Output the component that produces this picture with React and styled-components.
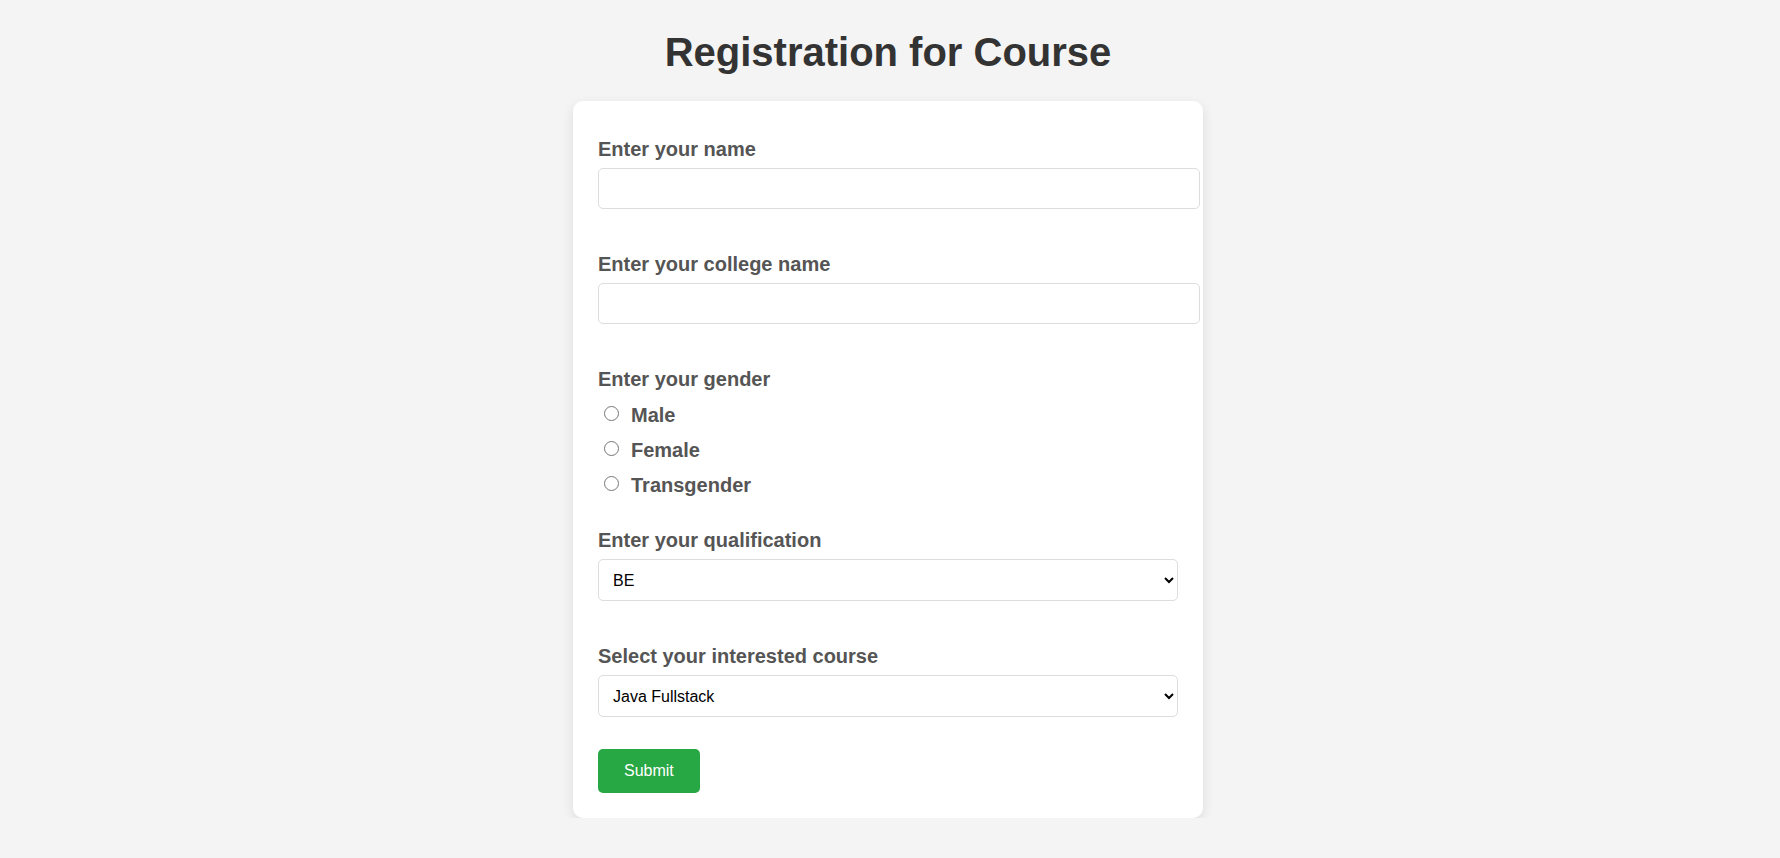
import React from "react";
import styled, { createGlobalStyle } from "styled-components";

const GlobalStyle = createGlobalStyle`
  html, body {
    margin: 0;
    padding: 0;
    background: #f4f4f4;
    font-family: "Liberation Sans", Arial, sans-serif;
  }
`;

const Page = styled.div`
  display: flex;
  flex-direction: column;
  align-items: center;
  padding: 0 4px 0 0;
`;

const Title = styled.h1`
  margin: 29px 0 26px;
  font-size: 40px;
  line-height: 46px;
  font-weight: bold;
  color: #333;
  text-align: center;
`;

const Card = styled.form`
  box-sizing: border-box;
  width: 630px;
  padding: 25px;
  background: #fff;
  border-radius: 10px;
  box-shadow: 0 4px 12px rgba(0, 0, 0, 0.1);
  display: flex;
  flex-direction: column;
  align-items: flex-start;
`;

const Label = styled.label`
  display: block;
  margin: 12px 0 7px;
  font-size: 20px;
  line-height: 23px;
  font-weight: bold;
  color: #555;
`;

const TextInput = styled.input`
  box-sizing: content-box;
  width: 100%;
  height: 19px;
  padding: 10px;
  margin: 0 0 32px;
  border: 1px solid #ddd;
  border-radius: 5px;
  font-family: "Liberation Sans", Arial, sans-serif;
  font-size: 16px;
  background: #fff;
  outline: none;
`;

const Select = styled.select`
  box-sizing: border-box;
  width: 100%;
  height: 42px;
  padding: 0 10px;
  margin: 0 0 32px;
  border: 1px solid #ddd;
  border-radius: 5px;
  font-family: "Liberation Sans", Arial, sans-serif;
  font-size: 16px;
  color: #000;
  background: #fff;
`;

const RadioGroup = styled.div`
  display: flex;
  flex-direction: column;
  gap: 12px;
  padding-top: 6px;
  margin-bottom: 20px;
`;

const RadioRow = styled.label`
  display: flex;
  align-items: center;
  font-size: 20px;
  line-height: 23px;
  font-weight: bold;
  color: #555;
`;

const Radio = styled.input`
  width: 15px;
  height: 15px;
  margin: 0 12px 4px 6px;
`;

const SubmitButton = styled.button`
  padding: 13px 26px;
  border: none;
  border-radius: 5px;
  background: #28a745;
  color: #fff;
  font-family: "Liberation Sans", Arial, sans-serif;
  font-size: 16px;
  line-height: 18px;
  cursor: pointer;
`;

export default function App() {
  return (
    <>
      <GlobalStyle />
      <Page>
        <Title>Registration for Course</Title>
        <Card onSubmit={(e) => e.preventDefault()}>
          <Label htmlFor="name">Enter your name</Label>
          <TextInput id="name" type="text" />

          <Label htmlFor="college">Enter your college name</Label>
          <TextInput id="college" type="text" />

          <Label>Enter your gender</Label>
          <RadioGroup>
            <RadioRow>
              <Radio type="radio" name="gender" value="male" />
              Male
            </RadioRow>
            <RadioRow>
              <Radio type="radio" name="gender" value="female" />
              Female
            </RadioRow>
            <RadioRow>
              <Radio type="radio" name="gender" value="transgender" />
              Transgender
            </RadioRow>
          </RadioGroup>

          <Label htmlFor="qual">Enter your qualification</Label>
          <Select id="qual" defaultValue="BE">
            <option value="BE">BE</option>
            <option value="BTech">BTech</option>
            <option value="BSc">BSc</option>
            <option value="MCA">MCA</option>
          </Select>

          <Label htmlFor="course">Select your interested course</Label>
          <Select id="course" defaultValue="java">
            <option value="java">Java Fullstack</option>
            <option value="python">Python Fullstack</option>
            <option value="mern">MERN Stack</option>
          </Select>

          <SubmitButton type="submit">Submit</SubmitButton>
        </Card>
      </Page>
    </>
  );
}
